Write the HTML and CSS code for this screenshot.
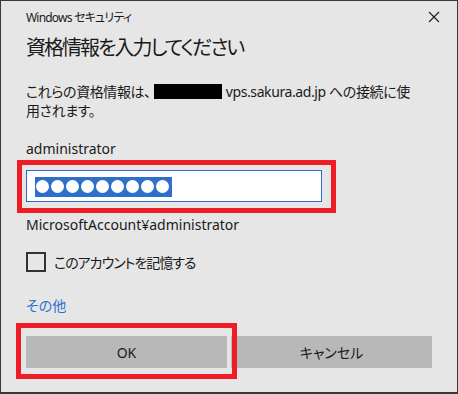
FILE: index.html
```html
<!DOCTYPE html>
<html lang="ja">
<head>
	<meta charset="UTF-8">
	<title>Windows セキュリティ</title>
	<link rel="stylesheet" href="styles.css">
</head>
<body>
	<div class="dialog">
		<div class="titlebar">
			<span class="caption">Windows セキュリティ</span>
			<svg class="close" width="12" height="12" viewBox="0 0 12 12">
				<path d="M1 1L11 11M11 1L1 11" stroke="#1a1a1a" stroke-width="1.1" fill="none"/>
			</svg>
		</div>
		<h1 class="heading">資格情報を入力してください</h1>
		<p class="desc">これらの資格情報は、<span class="redact"></span>vps.sakura.ad.jp への接続に使<br>用されます。</p>
		<div class="label">administrator</div>
		<div class="field">
			<div class="input">
				<span class="selected">
					<i class="dot"></i><i class="dot"></i><i class="dot"></i><i class="dot"></i><i class="dot"></i><i class="dot"></i><i class="dot"></i><i class="dot"></i><i class="dot"></i>
				</span>
			</div>
			<div class="mark mark-input"></div>
		</div>
		<div class="domain">MicrosoftAccount¥administrator</div>
		<label class="remember">
			<span class="check"></span>
			<span class="ja">このアカウントを記憶する</span>
		</label>
		<a class="more">その他</a>
		<div class="buttons">
			<div class="btn ok">OK
				<div class="mark mark-ok"></div>
			</div>
			<div class="btn">キャンセル</div>
		</div>
	</div>
</body>
</html>
```

FILE: styles.css
```css
*{
	box-sizing:border-box;
}
body{
	margin:0;
	font-family:"Noto Sans","Noto Sans CJK JP",sans-serif;
	font-feature-settings:"palt";
	color:#1a1a1a;
}
.ja{
	letter-spacing:-1px;
}
.dialog{
	width:458px;
	height:394px;
	background-color:#e6e6e6;
	border:1px solid #3a3a3a;
	border-bottom-width:2px;
	padding:0 25px;
	overflow:hidden;
}
.titlebar{
	height:32px;
	display:flex;
	align-items:center;
	justify-content:space-between;
	font-size:12px;
}
.caption{
	letter-spacing:-0.8px;
}
.close{
	margin-right:-8px;
}
.heading{
	margin:1px 0 0;
	font-size:20px;
	font-weight:normal;
	line-height:28px;
	letter-spacing:-2px;
}
.desc{
	margin:20px 0 0;
	font-size:14px;
	line-height:19px;
	letter-spacing:-0.4px;
}
.redact{
	display:inline-block;
	width:68px;
	height:15px;
	background-color:#000;
	margin:0 4px 0 3px;
	vertical-align:-2px;
}
.label,.domain,.more{
	font-size:14px;
	line-height:20px;
}
.label{
	margin-top:19px;
}
.field{
	position:relative;
	width:296px;
	margin-top:11px;
}
.input{
	height:32px;
	border:1px solid #2d6bc3;
	background-color:#fff;
	display:flex;
	align-items:center;
	padding:1px 0 0 8px;
}
.selected{
	display:flex;
	align-items:center;
	height:20px;
	padding:0 1px;
	background-color:#2f6fcc;
}
.dot{
	width:13px;
	height:13px;
	border-radius:50%;
	background-color:#fff;
	margin-right:2px;
}
.mark{
	position:absolute;
	border:5px solid #ee1c25;
}
.mark-input{
	left:-9px;
	top:-10px;
	right:-14px;
	bottom:-11px;
}
.domain{
	margin-top:13px;
}
.remember{
	display:flex;
	align-items:center;
	gap:8px;
	margin-top:17px;
	font-size:14px;
	height:20px;
}
.check{
	width:20px;
	height:20px;
	border:2px solid #333;
}
.more{
	display:block;
	margin-top:24px;
	color:#2e70cc;
}
.buttons{
	display:flex;
	gap:4px;
	margin-top:20px;
}
.btn{
	flex:1;
	height:32px;
	background-color:#b8b8b8;
	font-size:14px;
	display:flex;
	align-items:center;
	justify-content:center;
}
.ok{
	position:relative;
}
.mark-ok{
	left:-10px;
	top:-13px;
	right:-10px;
	bottom:-11px;
}
```
